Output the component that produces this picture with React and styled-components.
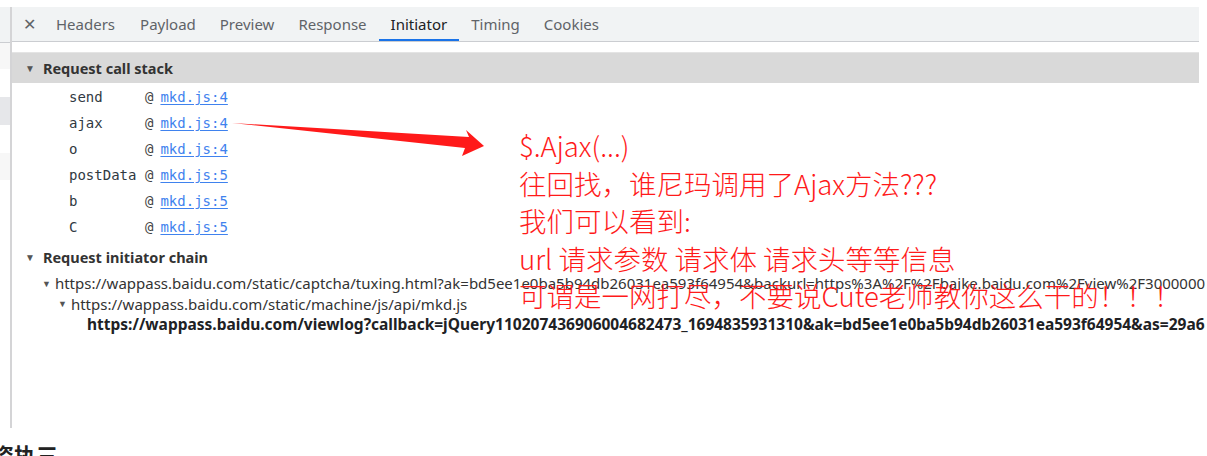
import React from "react";
import styled, { createGlobalStyle } from "styled-components";

const Global = createGlobalStyle`
  html, body { margin: 0; padding: 0; background: #fff; }
  body { font-family: "Segoe UI", "Noto Sans", "Open Sans", sans-serif; }
`;

const Page = styled.div`
  position: relative;
  width: 1207px;
  height: 456px;
  overflow: hidden;
  background: #fff;
  padding-top: 7px;
  box-sizing: border-box;
`;

const Frame = styled.div`
  display: flex;
  height: 421px;
`;

const Sidebar = styled.div`
  width: 10px;
  border-right: 2px solid #d4d4d6;
  display: flex;
  flex-direction: column;
`;

const SideCell = styled.div`
  height: ${(p) => p.$h}px;
  background: ${(p) => p.$bg};
  border-bottom: ${(p) => (p.$line ? "1px solid #cbcdd1" : "none")};
  flex-shrink: 0;
`;

const Panel = styled.div`
  width: 1187px;
  display: flex;
  flex-direction: column;
`;

const TabBar = styled.div`
  height: 34px;
  background: #f1f3f4;
  border-bottom: 1px solid #cbcdd1;
  display: flex;
  align-items: stretch;
  padding-left: 7px;
  flex-shrink: 0;
`;

const Close = styled.div`
  width: 20px;
  display: flex;
  align-items: center;
  justify-content: center;
  color: #5f6368;
  font-size: 16px;
  margin-right: 17px;
`;

const Tab = styled.div`
  position: relative;
  display: flex;
  align-items: center;
  padding: 0 ${(p) => p.$pad}px;
  margin-right: ${(p) => p.$mr || 0}px;
  font-size: 15px;
  color: ${(p) => (p.$active ? "#202124" : "#5f6368")};
  &::after {
    content: "";
    position: absolute;
    left: 0;
    right: 0;
    bottom: 0;
    height: 2px;
    background: ${(p) => (p.$active ? "#1a73e8" : "transparent")};
  }
`;

const Body = styled.div`
  padding-top: 10px;
  display: flex;
  flex-direction: column;
`;

const SectionHead = styled.div`
  height: 31px;
  background: #d9d9d9;
  border-top: 1px solid #e4e4e4;
  display: flex;
  align-items: center;
  padding-left: 13px;
  gap: 8px;
  font-size: 14.5px;
  font-weight: 700;
  color: #333;
  box-sizing: border-box;
`;

const PlainHead = styled(SectionHead)`
  background: transparent;
  border-top: none;
  height: 27px;
  margin-top: 3px;
  margin-bottom: 3px;
`;

const Tri = styled.span`
  font-size: ${(p) => p.$size || 10}px;
  color: ${(p) => p.$color || "#555"};
  line-height: 1;
`;

const Stack = styled.div`
  padding: 1px 0 0 57px;
  display: flex;
  flex-direction: column;
`;

const StackRow = styled.div`
  height: 26px;
  display: flex;
  align-items: center;
  font-family: "DejaVu Sans Mono", monospace;
  font-size: 14px;
  color: #303942;
`;

const Fn = styled.span`
  width: 76px;
`;

const At = styled.span`
  color: #444;
  margin-right: 7px;
`;

const Link = styled.a`
  color: #3f82ee;
  text-decoration: underline;
  text-underline-offset: 2px;
`;

const ChainRow = styled.div`
  height: 20.5px;
  display: flex;
  align-items: center;
  padding-left: ${(p) => p.$indent}px;
  gap: 4px;
  font-size: ${(p) => (p.$bold ? 15.5 : 15)}px;
  font-weight: ${(p) => (p.$bold ? 700 : 400)};
  color: ${(p) => (p.$bold ? "#202124" : "#333")};
  white-space: nowrap;
`;

const Footer = styled.div`
  position: absolute;
  left: -8px;
  top: 443px;
  font-family: "Noto Sans CJK SC", sans-serif;
  font-size: 22px;
  font-weight: 700;
  color: #222;
  line-height: 1;
`;

const Arrow = styled.svg`
  position: absolute;
  left: 0;
  top: 0;
  pointer-events: none;
`;

const Note = styled.div`
  position: absolute;
  left: 519px;
  top: 127px;
  font-family: "Noto Sans CJK SC", "Noto Sans", sans-serif;
  font-size: 27.5px;
  font-weight: 300;
  line-height: 37.5px;
  color: #ff1a1a;
  white-space: nowrap;
`;

const tabs = [
  { t: "Headers", pad: 0, mr: 13 },
  { t: "Payload", pad: 12 },
  { t: "Preview", pad: 12 },
  { t: "Response", pad: 12 },
  { t: "Initiator", pad: 12, active: true },
  { t: "Timing", pad: 12 },
  { t: "Cookies", pad: 12 },
];

const stack = [
  ["send", "mkd.js:4"],
  ["ajax", "mkd.js:4"],
  ["o", "mkd.js:4"],
  ["postData", "mkd.js:5"],
  ["b", "mkd.js:5"],
  ["C", "mkd.js:5"],
];

export default function App() {
  return (
    <>
      <Global />
      <Page>
        <Frame>
          <Sidebar>
            <SideCell $h={35} $bg="#f1f3f4" $line />
            <SideCell $h={26} $bg="#f7f7f7" />
            <SideCell $h={28} $bg="#fff" />
            <SideCell $h={28} $bg="#e6e7ea" />
            <SideCell $h={28} $bg="#fff" />
            <SideCell $h={27} $bg="#f7f7f7" />
          </Sidebar>
          <Panel>
            <TabBar>
              <Close>✕</Close>
              {tabs.map((x) => (
                <Tab key={x.t} $active={x.active} $pad={x.pad} $mr={x.mr}>
                  {x.t}
                </Tab>
              ))}
            </TabBar>
            <Body>
              <SectionHead>
                <Tri>▼</Tri>
                Request call stack
              </SectionHead>
              <Stack>
                {stack.map(([f, l], i) => (
                  <StackRow key={i}>
                    <Fn>{f}</Fn>
                    <At>@</At>
                    <Link>{l}</Link>
                  </StackRow>
                ))}
              </Stack>
              <PlainHead>
                <Tri>▼</Tri>
                Request initiator chain
              </PlainHead>
              <ChainRow $indent={30}>
                <Tri $size={9}>▼</Tri>
                https://wappass.baidu.com/static/captcha/tuxing.html?ak=bd5ee1e0ba5b94db26031ea593f64954&amp;backurl=https%3A%2F%2Fbaike.baidu.com%2Fview%2F3000000
              </ChainRow>
              <ChainRow $indent={46}>
                <Tri $size={9}>▼</Tri>
                https://wappass.baidu.com/static/machine/js/api/mkd.js
              </ChainRow>
              <ChainRow $indent={75} $bold>
                https://wappass.baidu.com/viewlog?callback=jQuery110207436906004682473_1694835931310&amp;ak=bd5ee1e0ba5b94db26031ea593f64954&amp;as=29a6
              </ChainRow>
            </Body>
          </Panel>
        </Frame>
        <Footer>资执三</Footer>
        <Arrow width="1207" height="456" viewBox="0 0 1207 456">
          <path d="M232 123 L469 137 L466 130 L484 146 L462 156 L465 148 Z" fill="#ff1a1a" />
        </Arrow>
        <Note>
          <div>$.Ajax(...)</div>
          <div>往回找，谁尼玛调用了Ajax方法???</div>
          <div>我们可以看到:</div>
          <div>url 请求参数 请求体 请求头等等信息</div>
          <div>可谓是一网打尽，不要说Cute老师教你这么干的！！！</div>
        </Note>
      </Page>
    </>
  );
}
